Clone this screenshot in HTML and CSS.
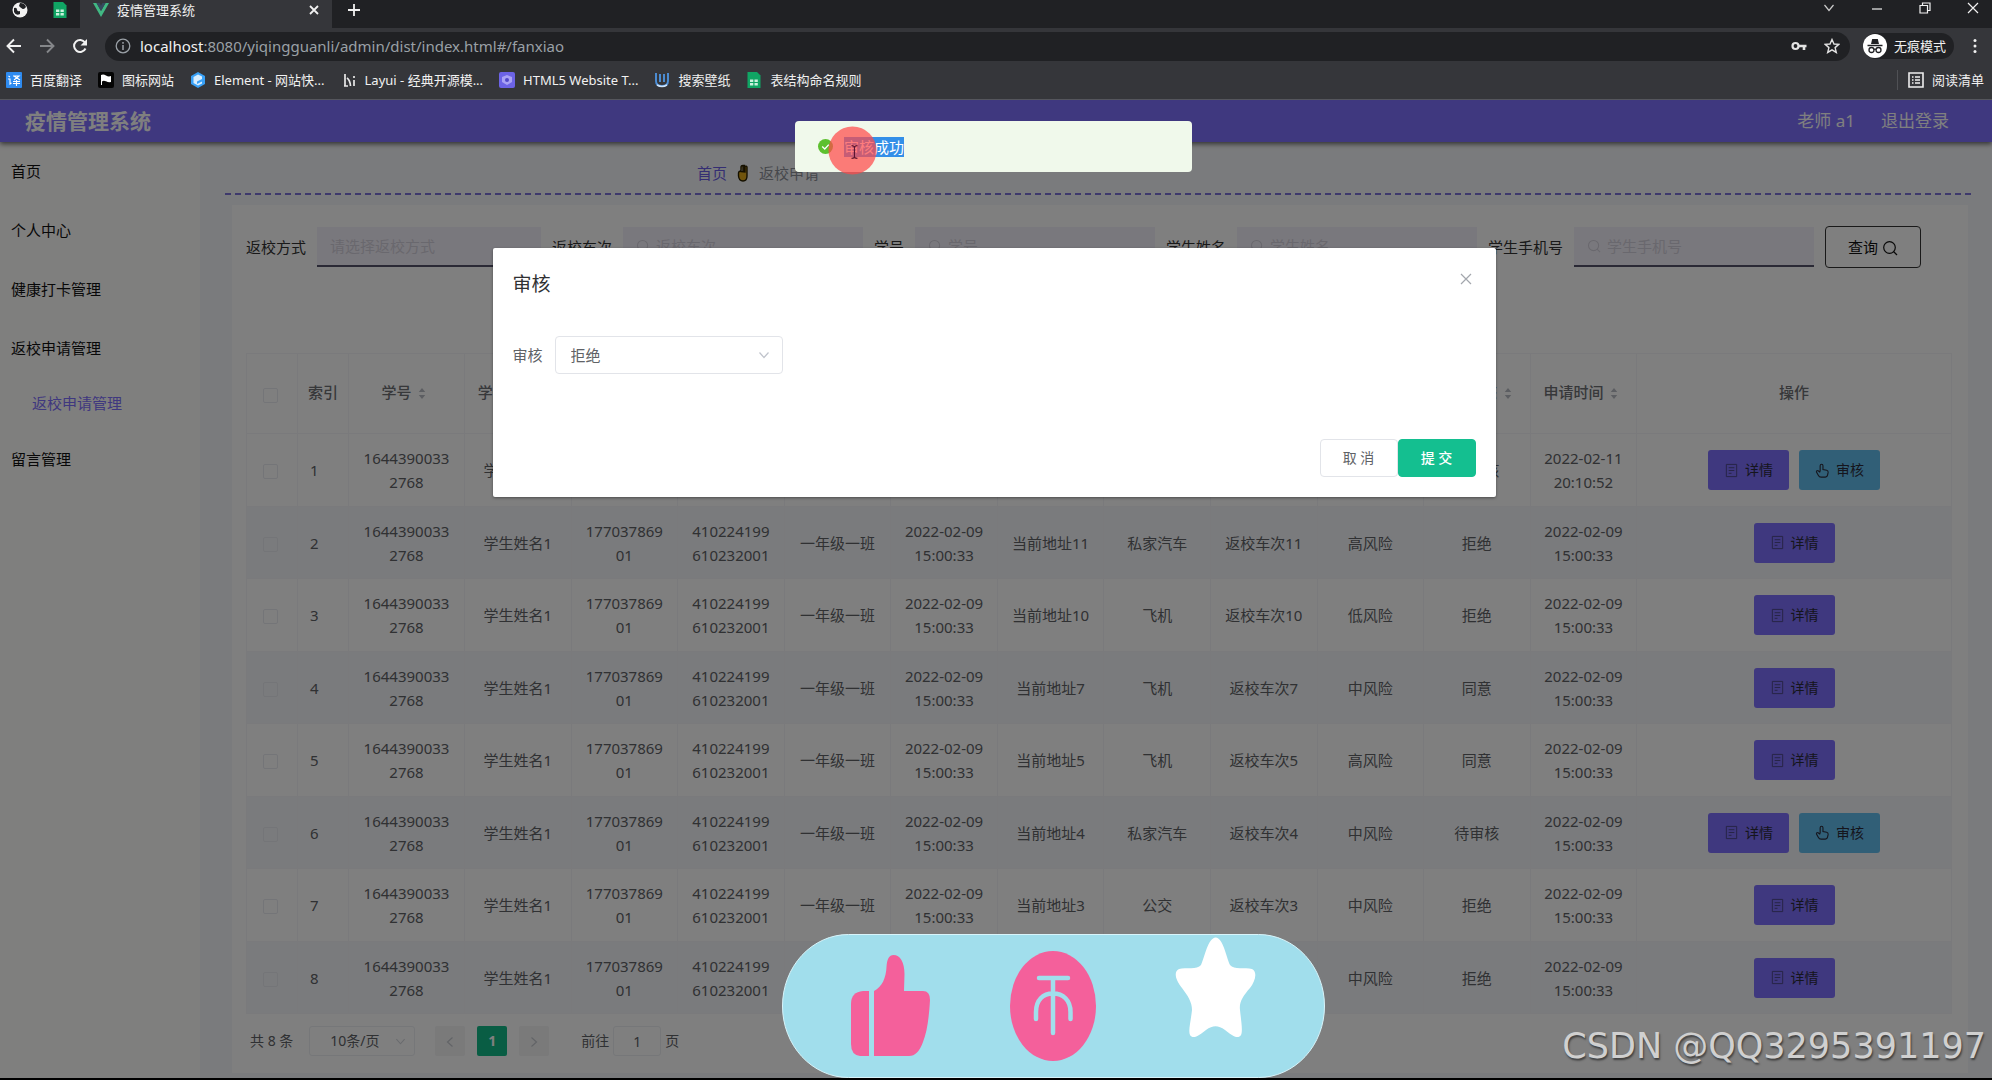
FILE: index.html
```html
<!DOCTYPE html>
<html lang="zh-CN">
<head>
<meta charset="utf-8">
<title>疫情管理系统</title>
<link rel="stylesheet" href="styles.css">
</head>
<body>
<svg class="sprite" aria-hidden="true">
  <symbol id="i-search" viewBox="0 0 16 16"><circle cx="7.5" cy="7.5" r="5.8" fill="none" stroke="currentColor" stroke-width="1.2"/><path d="M11.5 11.5L15 15" stroke="currentColor" stroke-width="1.2"/></symbol>
  <symbol id="i-doc" viewBox="0 0 16 16"><path d="M2.5 1.5h11v13h-11zM5 5h6M5 8h6M5 11h3" fill="none" stroke="currentColor"/></symbol>
  <symbol id="i-hand" viewBox="0 0 16 16"><path d="M5.5 9V2.8a1.5 1.5 0 0 1 3 0V7l4 .8q1.7.4 1.5 2.2l-.6 3q-.4 2-2.400 2H6.500Q4.500 15 3.500 13L1.600 9.600q-.3-1.300 1-1.500 1-.2 2.900 2" fill="none" stroke="currentColor" stroke-width="1.2"/></symbol>
  <symbol id="i-sort" viewBox="0 0 8 14"><path d="M4 1L7.500 5.500H.5zM4 13L7.500 8.500H.5z" fill="currentColor"/></symbol>
  <symbol id="i-sheet" viewBox="0 0 16 16"><path d="M1.500 0H11l3.500 3.500V16h-13z" fill="#10a564"/><path d="M4 7.500h3.300v2.500H4zM8.500 7.500h3.300v2.500H8.500zM4 11h3.300v2.500H4zM8.500 11h3.300v2.500H8.500z" fill="#c9f2dd"/></symbol>
  <symbol id="i-down" viewBox="0 0 12 12"><path d="M1.500 3.500L6 8.500l4.500-5" fill="none" stroke="currentColor" stroke-width="1.2"/></symbol>
</svg>

<header class="browser">
  <div class="tabs">
    <div class="pinned">
      <svg class="ic" viewBox="0 0 16 16"><circle cx="8" cy="8" r="7.500" fill="#f2f2f2"/><path d="M2 6q3-1 3 1.500t3 1.500v3q-4 2-6-2zM8 1q5 0 6 4-2 3-4 1.500T7 4z" fill="#202124"/></svg>
      <span class="divider"></span>
      <svg class="ic"><use href="#i-sheet"/></svg>
    </div>
    <div class="tab">
      <svg class="ic" viewBox="0 0 16 16"><path d="M0 1h3.500L8 9l4.500-8H16L8 15z" fill="#41b883"/><path d="M3.500 1h3L8 3.800 9.500 1h3L8 9z" fill="#35495e"/></svg>
      <span class="tab-name">疫情管理系统</span>
      <button class="plain" aria-label="关闭标签页"><svg class="ic12" viewBox="0 0 12 12"><path d="M2 2l8 8M10 2l-8 8" stroke="#f1f1f1" stroke-width="1.800"/></svg></button>
    </div>
    <button class="plain new-tab" aria-label="新标签页"><svg class="ic" viewBox="0 0 16 16"><path d="M8 2v12M2 8h12" stroke="#f1f1f1" stroke-width="1.800"/></svg></button>
    <div class="window-buttons">
      <button class="plain" aria-label="搜索标签页"><svg class="ic12" viewBox="0 0 12 12"><path d="M1.500 3L6 8.500 10.500 3" fill="none" stroke="#ccc" stroke-width="1.200"/></svg></button>
      <button class="plain" aria-label="最小化"><svg class="ic12" viewBox="0 0 12 12"><path d="M1 7h10" stroke="#f1f1f1" stroke-width="1.200"/></svg></button>
      <button class="plain" aria-label="还原"><svg class="ic12" viewBox="0 0 12 12"><path d="M1 3.500h7.500V11H1zM3.500 3.500V1H11v7.500H8.500" fill="none" stroke="#f1f1f1" stroke-width="1.200"/></svg></button>
      <button class="plain" aria-label="关闭"><svg class="ic12" viewBox="0 0 12 12"><path d="M1 1l10 10M11 1L1 11" stroke="#f1f1f1" stroke-width="1.200"/></svg></button>
    </div>
  </div>
  <div class="toolbar">
    <button class="plain" aria-label="后退"><svg class="ic" viewBox="0 0 16 16"><path d="M15 8H2M8 1.500L1.500 8 8 14.500" fill="none" stroke="#f1f1f1" stroke-width="1.900"/></svg></button>
    <button class="plain" aria-label="前进"><svg class="ic" viewBox="0 0 16 16"><path d="M1 8h13M8 1.500L14.500 8 8 14.500" fill="none" stroke="#85878a" stroke-width="1.900"/></svg></button>
    <button class="plain" aria-label="刷新"><svg class="ic" viewBox="0 0 16 16"><path d="M13.500 10.500A6 6 0 1 1 13 4.500" fill="none" stroke="#f1f1f1" stroke-width="2"/><path d="M15 1v6.500H8.500z" fill="#f1f1f1"/></svg></button>
    <div class="omnibox">
      <svg class="ic" viewBox="0 0 16 16"><circle cx="8" cy="8" r="6.800" fill="none" stroke="#9aa0a6" stroke-width="1.300"/><path d="M8 7v5M8 4v1.700" stroke="#9aa0a6" stroke-width="1.500"/></svg>
      <span class="url"><b>localhost</b>:8080/yiqingguanli/admin/dist/index.html#/fanxiao</span>
      <svg class="ic" viewBox="0 0 16 16"><circle cx="4.500" cy="8" r="3" fill="none" stroke="#e3e3e3" stroke-width="2.200"/><path d="M7 8h8.500M13 8v4" stroke="#e3e3e3" stroke-width="2.600"/></svg>
      <svg class="ic" viewBox="0 0 16 16"><path d="M8 1.500l2 4.500 4.800.4-3.700 3.200 1.200 4.800L8 11.800l-4.300 2.600 1.200-4.800L1.200 6.400 6 6z" fill="none" stroke="#e3e3e3" stroke-width="1.400"/></svg>
    </div>
    <div class="incognito">
      <svg viewBox="0 0 24 24"><circle cx="12" cy="12" r="12" fill="#fff"/><path d="M8 10l1.200-5h5.600L16 10z" fill="#202124"/><path d="M4.500 11.500h15" stroke="#202124" stroke-width="1.500"/><g fill="none" stroke="#202124" stroke-width="1.300"><circle cx="8.500" cy="16" r="2.500"/><circle cx="15.500" cy="16" r="2.500"/><path d="M11 15.500q1-.6 2 0"/></g></svg>
      <span>无痕模式</span>
    </div>
    <button class="plain" aria-label="更多"><svg class="ic" viewBox="0 0 16 16"><g fill="#f1f1f1"><circle cx="8" cy="2.500" r="1.500"/><circle cx="8" cy="8" r="1.500"/><circle cx="8" cy="13.500" r="1.500"/></g></svg></button>
  </div>
  <nav class="bookmarks">
    <a href="#"><svg class="ic" viewBox="0 0 16 16"><rect width="16" height="16" rx="1" fill="#2e8bf0"/><path d="M2.500 4l1.500 1M2 7h2v5l1.500-1M7 4h6l-5 4M8 4l6 4M7 9.500h7M7 11.500h7M10.500 8v6" fill="none" stroke="#fff" stroke-width="1.100"/></svg>百度翻译</a>
    <a href="#"><svg class="ic" viewBox="0 0 16 16"><rect width="16" height="16" rx="2" fill="#050505"/><path d="M3 13V3q2.500-1 5 .5t5 .5v6q-2.500.5-5-.7t-4 .2V13z" fill="#fff"/></svg>图标网站</a>
    <a href="#"><svg class="ic" viewBox="0 0 16 16"><path d="M8 0l7 4v8l-7 4-7-4V4z" fill="#38a0f6"/><path d="M12 4.500L8 2.500 3.500 5v6L8 13.500l4-2v-2L7 12V9.500L12 7z" fill="#d7edff"/></svg>Element - 网站快...</a>
    <a href="#"><svg class="ic" viewBox="0 0 16 16"><path d="M3 14h4M4 2v12M6 6q3 2 3.500 8M13 8v6M13 4v2" fill="none" stroke="#e8e8e8" stroke-width="1.700"/></svg>Layui - 经典开源模...</a>
    <a href="#"><svg class="ic" viewBox="0 0 16 16"><rect width="16" height="16" rx="2" fill="#6c63e6"/><path d="M3 5l5-2 5 2v5l-5 3-5-3z" fill="#a9a2f5"/><circle cx="8" cy="8" r="2" fill="#5148c9"/></svg>HTML5 Website T...</a>
    <a href="#"><svg class="ic" viewBox="0 0 16 16"><path d="M2 1v8q0 5 6 5t6-5V1M6 2v8M10 2v8" fill="none" stroke="#4d90d9" stroke-width="1.900"/><path d="M3 13q5 3 10 0" fill="none" stroke="#cfe4fa" stroke-width="1.500"/></svg>搜索壁纸</a>
    <a href="#"><svg class="ic"><use href="#i-sheet"/></svg>表结构命名规则</a>
    <a href="#" class="reading"><svg class="ic" viewBox="0 0 16 16"><path d="M1 1h14v14H1zM4 5h1.500M7 5h5M4 8h1.500M7 8h5M4 11h1.500M7 11h5" fill="none" stroke="#eee" stroke-width="1.600"/></svg>阅读清单</a>
  </nav>
</header>

<div class="viewport">
  <header class="topbar">
    <h1>疫情管理系统</h1>
    <span>老师 a1</span>
    <a href="#">退出登录</a>
  </header>
  <div class="columns">
    <nav class="side">
      <a href="#">首页</a>
      <a href="#">个人中心</a>
      <a href="#">健康打卡管理</a>
      <a href="#">返校申请管理</a>
      <a href="#" class="sub">返校申请管理</a>
      <a href="#">留言管理</a>
    </nav>
    <main>
      <div class="crumbs">
        <a href="#">首页</a>
        <svg viewBox="0 0 12 18"><path d="M4 7V3q0-1.500 1.500-1.500M6 8V1.500h1.500V8M8 8V2.500q1.500-1 2 .5v9q0 5-4 5T1.500 12V9Q2 6.500 4 7.500z" fill="#e0a818" stroke="#2a2000" stroke-width="1.400"/></svg>
        <span>返校申请</span>
      </div>
      <section class="card">
        <form class="filters">
          <label for="way">返校方式</label>
          <select id="way" class="way"><option>请选择返校方式</option></select>
          <label for="train">返校车次</label>
          <div class="field"><svg><use href="#i-search"/></svg><input id="train" placeholder="返校车次"></div>
          <label for="no">学号</label>
          <div class="field"><svg><use href="#i-search"/></svg><input id="no" placeholder="学号"></div>
          <label for="name">学生姓名</label>
          <div class="field"><svg><use href="#i-search"/></svg><input id="name" placeholder="学生姓名"></div>
          <label for="phone">学生手机号</label>
          <div class="field"><svg><use href="#i-search"/></svg><input id="phone" placeholder="学生手机号"></div>
          <button type="button" class="query">查询 <svg><use href="#i-search"/></svg></button>
        </form>
        <table>
          <colgroup><col class="c-narrow"><col class="c-narrow"><col class="c-no"><col span="11" class="c-data"><col></colgroup>
          <thead><tr>
            <th><input type="checkbox" aria-label="全选"></th><th>索引</th>
            <th>学号 <svg><use href="#i-sort"/></svg></th><th>学生姓名 <svg><use href="#i-sort"/></svg></th><th>手机号 <svg><use href="#i-sort"/></svg></th><th>身份证 <svg><use href="#i-sort"/></svg></th><th>班级 <svg><use href="#i-sort"/></svg></th><th>返校时间 <svg><use href="#i-sort"/></svg></th><th>当前地址 <svg><use href="#i-sort"/></svg></th><th>返校方式 <svg><use href="#i-sort"/></svg></th><th>返校车次 <svg><use href="#i-sort"/></svg></th><th>风险等级 <svg><use href="#i-sort"/></svg></th><th>审核状态 <svg><use href="#i-sort"/></svg></th><th>申请时间 <svg><use href="#i-sort"/></svg></th><th>操作</th>
          </tr></thead>
          <tbody>
            <tr><td><input type="checkbox" aria-label="选择第1行"></td><td>1</td><td>16443900332768</td><td>学生姓名1</td><td>17703786901</td><td>410224199610232001</td><td>一年级一班</td><td>2022-02-11 20:10:52</td><td>当前地址</td><td>飞机</td><td>返校车次</td><td>低风险</td><td>待审核</td><td>2022-02-11 20:10:52</td><td><button class="act"><svg><use href="#i-doc"/></svg>详情</button><button class="act audit"><svg><use href="#i-hand"/></svg>审核</button></td></tr>
            <tr><td><input type="checkbox" aria-label="选择第2行"></td><td>2</td><td>16443900332768</td><td>学生姓名1</td><td>17703786901</td><td>410224199610232001</td><td>一年级一班</td><td>2022-02-09 15:00:33</td><td>当前地址11</td><td>私家汽车</td><td>返校车次11</td><td>高风险</td><td>拒绝</td><td>2022-02-09 15:00:33</td><td><button class="act"><svg><use href="#i-doc"/></svg>详情</button></td></tr>
            <tr><td><input type="checkbox" aria-label="选择第3行"></td><td>3</td><td>16443900332768</td><td>学生姓名1</td><td>17703786901</td><td>410224199610232001</td><td>一年级一班</td><td>2022-02-09 15:00:33</td><td>当前地址10</td><td>飞机</td><td>返校车次10</td><td>低风险</td><td>拒绝</td><td>2022-02-09 15:00:33</td><td><button class="act"><svg><use href="#i-doc"/></svg>详情</button></td></tr>
            <tr><td><input type="checkbox" aria-label="选择第4行"></td><td>4</td><td>16443900332768</td><td>学生姓名1</td><td>17703786901</td><td>410224199610232001</td><td>一年级一班</td><td>2022-02-09 15:00:33</td><td>当前地址7</td><td>飞机</td><td>返校车次7</td><td>中风险</td><td>同意</td><td>2022-02-09 15:00:33</td><td><button class="act"><svg><use href="#i-doc"/></svg>详情</button></td></tr>
            <tr><td><input type="checkbox" aria-label="选择第5行"></td><td>5</td><td>16443900332768</td><td>学生姓名1</td><td>17703786901</td><td>410224199610232001</td><td>一年级一班</td><td>2022-02-09 15:00:33</td><td>当前地址5</td><td>飞机</td><td>返校车次5</td><td>高风险</td><td>同意</td><td>2022-02-09 15:00:33</td><td><button class="act"><svg><use href="#i-doc"/></svg>详情</button></td></tr>
            <tr><td><input type="checkbox" aria-label="选择第6行"></td><td>6</td><td>16443900332768</td><td>学生姓名1</td><td>17703786901</td><td>410224199610232001</td><td>一年级一班</td><td>2022-02-09 15:00:33</td><td>当前地址4</td><td>私家汽车</td><td>返校车次4</td><td>中风险</td><td>待审核</td><td>2022-02-09 15:00:33</td><td><button class="act"><svg><use href="#i-doc"/></svg>详情</button><button class="act audit"><svg><use href="#i-hand"/></svg>审核</button></td></tr>
            <tr><td><input type="checkbox" aria-label="选择第7行"></td><td>7</td><td>16443900332768</td><td>学生姓名1</td><td>17703786901</td><td>410224199610232001</td><td>一年级一班</td><td>2022-02-09 15:00:33</td><td>当前地址3</td><td>公交</td><td>返校车次3</td><td>中风险</td><td>拒绝</td><td>2022-02-09 15:00:33</td><td><button class="act"><svg><use href="#i-doc"/></svg>详情</button></td></tr>
            <tr><td><input type="checkbox" aria-label="选择第8行"></td><td>8</td><td>16443900332768</td><td>学生姓名1</td><td>17703786901</td><td>410224199610232001</td><td>一年级一班</td><td>2022-02-09 15:00:33</td><td>当前地址2</td><td>飞机</td><td>返校车次2</td><td>中风险</td><td>拒绝</td><td>2022-02-09 15:00:33</td><td><button class="act"><svg><use href="#i-doc"/></svg>详情</button></td></tr>
          </tbody>
        </table>
        <div class="pager">
          <span>共 8 条</span>
          <div class="size"><select aria-label="每页条数"><option>10条/页</option></select><svg><use href="#i-down"/></svg></div>
          <button class="page" aria-label="上一页"><svg class="prev"><use href="#i-down"/></svg></button>
          <button class="page current">1</button>
          <button class="page" aria-label="下一页"><svg class="next"><use href="#i-down"/></svg></button>
          <label class="jump">前往<input value="1">页</label>
        </div>
      </section>
    </main>
  </div>

  <div class="mask">
    <div class="dialog" role="dialog" aria-labelledby="dialog-title">
      <div class="dialog-head"><h2 id="dialog-title">审核</h2><button class="plain" aria-label="关闭"><svg class="ic12" viewBox="0 0 12 12"><path d="M1 1l10 10M11 1L1 11" stroke="#a3a6ad" stroke-width="1.200"/></svg></button></div>
      <div class="dialog-body">
        <label for="result">审核</label>
        <div class="choice"><select id="result"><option>拒绝</option></select><svg><use href="#i-down"/></svg></div>
      </div>
      <div class="dialog-foot"><button class="cancel">取 消</button><button class="submit">提 交</button></div>
    </div>
  </div>

  <div class="toast" role="alert">
    <svg viewBox="0 0 16 16"><circle cx="8" cy="8" r="8" fill="#5dc02f"/><path d="M4.500 8l2.700 2.700L11.500 6" fill="none" stroke="#fff" stroke-width="1.400"/></svg>
    <span>审核成功</span>
    <svg class="pointer" viewBox="0 0 50 50"><circle cx="25" cy="25" r="24.500" fill="#ff4a4a" fill-opacity=".72"/><path d="M24 20q3 0 3 2v9q0 2-3 2M30 20q-3 0-3 2v9q0 2 3 2" fill="none" stroke="#5a1530" stroke-width="1.100"/></svg>
  </div>

  <svg class="like-bar" viewBox="0 0 543 144">
    <rect x=".5" y=".5" width="542" height="143" rx="66" ry="71.500" fill="#a1deec" stroke="#d8f4fa"/>
    <g fill="#f4609b">
      <path d="M87 57V122H78Q69 121 69 110V70Q69 58 81 57Z"/>
      <path d="M92 57C100 53 104 44 104.500 33C105 25 107 21 111.600 21C118 21 122.500 28 122.500 40L122 57H141Q148 57 148 66C147 84 145 98 141 108Q136 122 127 122H92Z"/>
      <ellipse cx="271" cy="72" rx="43" ry="55"/>
    </g>
    <path d="M257 44H286M271 44V99M254 85V78C254 66 261 59.500 271 59.500S288.500 66 288.500 78V85" fill="none" stroke="#a1deec" stroke-width="4.500" stroke-linecap="round"/>
    <path d="M433.700 3.500C441 4 444 22 448 31C452 36 463 33 470 35C476 38 473 48 468 54C461 62 457 68 458 76C459 86 461 97 459 101C456 106 449 101 443 96C436 91 431 91 424 96C418 101 411 106 408 101C406 97 409 86 410 76C410 68 406 62 400 54C394 47 391 38 397 35C404 33 415 36 419 31C423 22 426 4 433.700 3.500Z" fill="#fff"/>
  </svg>
  <div class="watermark">CSDN @QQ3295391197</div>
</div>
</body>
</html>
```
FILE: styles.css
```css
* { box-sizing: border-box; }
body {
  margin: 0;
  min-height: 100vh;
  display: flex;
  flex-direction: column;
  background: #000;
  padding-bottom: 2px;
  font: 15px/24px "Noto Sans", "Noto Sans CJK SC", sans-serif;
  color: #606266;
}
button, input, select { font: inherit; color: inherit; margin: 0; }
select { appearance: none; }
a { color: inherit; text-decoration: none; }
.sprite { position: absolute; width: 0; height: 0; }
.plain { border: 0; padding: 0; background: none; display: flex; }
.ic { width: 16px; height: 16px; flex: none; }
.ic12 { width: 12px; height: 12px; flex: none; }

/* Browser frame */
.browser { background: #35363a; color: #f1f1f1; font-size: 13px; line-height: 20px; border-bottom: 1px solid #55565c; }
.tabs { display: flex; height: 28px; background: #202124; }
.pinned { width: 80px; display: flex; align-items: center; padding: 0 12px 8px; gap: 12px; }
.divider { width: 1px; height: 20px; background: #3c3d41; }
.tab { width: 252px; background: #35363a; display: flex; align-items: center; padding: 0 12px 8px 13px; gap: 8px; }
.tab-name { flex: 1; }
.new-tab { padding: 2px 14px; }
.window-buttons { margin-left: auto; display: flex; gap: 36px; padding: 2px 13px; }
.toolbar { display: flex; align-items: center; height: 36px; padding: 0 9px 0 6px; gap: 17px; }
.omnibox { flex: 1; height: 29px; border-radius: 15px; background: #202124; display: flex; align-items: center; gap: 17px; padding: 0 10px; }
.url { flex: 1; font-size: 15px; color: #9aa0a6; margin-left: -8px; }
.url b { font-weight: 400; color: #f1f1f1; }
.incognito { display: flex; align-items: center; height: 26px; gap: 7px; padding-right: 8px; margin: 0 -4px; border-radius: 13px; background: #202124; }
.incognito svg { width: 24px; height: 24px; }
.bookmarks { display: flex; height: 35px; align-items: center; gap: 16px; padding: 0 8px 3px 6px; }
.bookmarks a { display: flex; align-items: center; gap: 8px; white-space: nowrap; }
.bookmarks .reading { margin-left: auto; border-left: 1px solid #505155; padding-left: 10px; }

/* Application */
.viewport { position: relative; flex: 1; display: flex; flex-direction: column; background: #f2f3f5; overflow: hidden; }
.topbar { display: flex; align-items: center; height: 42px; padding: 0 43px 0 25px; gap: 26px; background: #7e70fe; color: #fff; font-size: 17px; box-shadow: 0 2px 5px rgba(0, 0, 0, .6); z-index: 1; }
.topbar h1 { margin: 0 auto 0 0; font-size: 21px; line-height: 30px; }
.columns { flex: 1; display: flex; }
.side { width: 200px; flex: none; background: #fffefd; display: flex; flex-direction: column; color: #111; }
.side a { height: 59px; line-height: 59px; padding-left: 11px; }
.side .sub { height: 52px; line-height: 50px; padding-left: 32px; color: #7e70fe; }
main { flex: 1; min-width: 0; background: #f5f7fa; padding: 0 19px 5px 25px; display: flex; flex-direction: column; }
.crumbs { height: 53px; display: flex; align-items: center; gap: 10px; padding: 8px 0 0 27%; color: #8d9099; background: repeating-linear-gradient(90deg, #7c72d8 0 6px, transparent 6px 10px) bottom / 100% 2px no-repeat; }
.crumbs a { color: #6a5ce6; }
.crumbs svg { width: 12px; height: 18px; }
.card { flex: 1; margin: 10px 5px 0 7px; padding: 22px 16px 15px 14px; background: #fff; }

.filters { display: flex; align-items: center; height: 40px; padding-right: 31px; margin-bottom: 86px; gap: 11px; }
.filters label { white-space: nowrap; color: #333; }
.filters .way { width: 224px; flex: none; }
.way, .field { height: 40px; border: 0; border-bottom: 2px solid #55536a; border-radius: 0; background: #f3f1fa; padding: 0 13px; color: #d3d0dc; }
.field { flex: 1; min-width: 0; display: flex; align-items: center; gap: 6px; }
.field svg { width: 14px; height: 14px; flex: none; }
.field input { border: 0; background: none; min-width: 0; width: 100%; padding: 0; outline: 0; }
.field input::placeholder { color: #d3d0dc; opacity: 1; }
.query { flex: none; width: 96px; height: 42px; border: 1px solid #333; border-radius: 4px; background: none; color: #111; padding: 0; }
.query svg { width: 16px; height: 16px; vertical-align: -3px; }

table { width: 100%; table-layout: fixed; border-collapse: separate; border-spacing: 0; border: 1px solid #f4f5f8; border-width: 1px 0 0 1px; }
.c-narrow { width: 51px; }
.c-no { width: 116px; }
.c-data { width: 6.25%; }
th, td { padding: 0 12px; border: 1px solid #f4f5f8; border-width: 0 1px 1px 0; text-align: center; word-break: break-all; }
th { height: 80px; font-weight: 500; color: #6e7075; white-space: nowrap; padding: 0 0 3px; }
th svg { width: 8px; height: 13px; margin: 0 5px 0 3px; vertical-align: -2px; color: #b9bcc4; }
td { height: 73px; }
tr:nth-child(even) td { height: 72px; background: #f5f7fa; }
td:nth-child(2) { text-align: left; }
td:first-child, th:first-child { padding: 0 4px 0 0; }
table input { appearance: none; width: 15px; height: 15px; border: 1px solid #e9ebf0; border-radius: 2px; vertical-align: middle; }
.act { width: 81px; height: 40px; border: 0; border-radius: 3px; background: #7e70fe; color: #2b2b3a; font-size: 14px; padding: 0; display: inline-flex; align-items: center; justify-content: center; gap: 6px; vertical-align: middle; }
.act + .act { margin-left: 10px; }
.act svg { width: 15px; height: 15px; opacity: .6; }
.audit { background: #63bfef; }
.audit svg { opacity: 1; }

.pager { display: flex; align-items: center; gap: 12px; margin-top: 12px; height: 30px; padding-left: 4px; font-size: 14px; }
.size { position: relative; width: 106px; margin: 0 8px 0 4px; }
.size select { width: 100%; height: 30px; border: 1px solid #eceef2; border-radius: 3px; background: none; padding: 0 20px; }
.size svg { position: absolute; right: 9px; top: 10px; width: 11px; height: 11px; color: #d3d6dc; }
.page { width: 30px; height: 30px; border: 0; border-radius: 2px; background: #f4f4f5; padding: 0; }
.page svg { width: 12px; height: 12px; color: #c5c8ce; vertical-align: middle; }
.prev { transform: rotate(90deg); }
.next { transform: rotate(-90deg); }
.current { background: #12bb88; color: #fff; font-weight: 700; }
.jump { margin-left: 20px; display: flex; align-items: center; gap: 4px; }
.jump input { width: 48px; height: 30px; border: 1px solid #eceef2; border-radius: 3px; background: none; text-align: center; }

/* Layers over the application */
.mask { position: absolute; inset: 0; z-index: 2; background: rgba(0, 0, 0, .5); display: flex; justify-content: center; align-items: flex-start; padding: 148px 4px 0 0; }
.dialog { width: min(1003px, 90%); background: #fff; border-radius: 2px; box-shadow: 0 1px 3px rgba(0, 0, 0, .4); padding: 20px; }
.dialog-head { display: flex; justify-content: space-between; padding: 1px 4px 0 0; align-items: center; height: 30px; }
.dialog-head h2 { margin: 0; font-size: 19px; line-height: 28px; font-weight: 400; color: #303133; }
.dialog-head button { padding-bottom: 10px; }
.dialog-body { display: flex; align-items: center; gap: 12px; padding: 38px 0 65px; }
.choice { position: relative; width: 228px; }
.choice select { width: 100%; height: 38px; border: 1px solid #e2e4e9; border-radius: 4px; background: #fff; padding: 0 15px; }
.choice svg { position: absolute; right: 13px; top: 13px; width: 12px; height: 12px; color: #c0c4cc; }
.dialog-foot { display: flex; justify-content: flex-end; }
.dialog-foot button { height: 38px; width: 78px; padding: 0; border: 1px solid #e2e4e9; border-radius: 4px; background: #fff; font-size: 14px; }
.dialog-foot .submit { background: #14bf90; border-color: #14bf90; color: #fff; font-weight: 500; }

.toast { position: absolute; z-index: 3; top: 21px; left: 50%; margin-left: -201px; width: 397px; height: 51px; border-radius: 4px; background: #f0f9eb; display: flex; align-items: center; gap: 11px; padding: 0 23px; }
.toast > svg { width: 15px; height: 15px; }
.toast span { background: #338fe8; color: #fff; line-height: 20px; }
.toast .pointer { position: absolute; left: 33px; top: 5px; width: 49px; height: 49px; }
.like-bar { position: absolute; z-index: 4; left: 50%; bottom: 0; margin-left: -214px; width: 543px; height: 144px; }
.watermark { position: absolute; z-index: 5; right: 6px; bottom: 11px; font: 35px/42px "DejaVu Sans", sans-serif; color: #d0d0d0; text-shadow: 1px 2px 2px rgba(0, 0, 0, .5); white-space: nowrap; }
```
